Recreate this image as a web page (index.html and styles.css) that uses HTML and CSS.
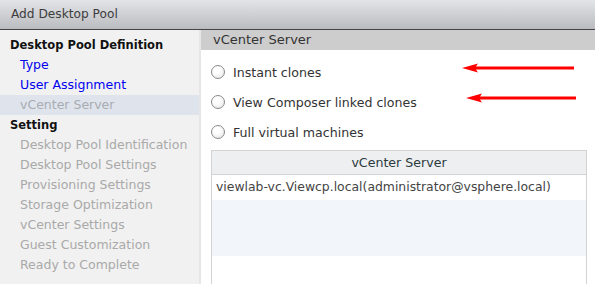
FILE: index.html
```html
<!DOCTYPE html>
<html lang="en">
<head>
  <meta charset="UTF-8">
  <title>Add Desktop Pool</title>
  <link rel="stylesheet" href="styles.css">
</head>
<body>
  <header class="title-bar">Add Desktop Pool</header>
  <div class="wizard">
    <nav class="steps">
      <div class="step group">Desktop Pool Definition</div>
      <div class="step link">Type</div>
      <div class="step link">User Assignment</div>
      <div class="step current">vCenter Server</div>
      <div class="step group">Setting</div>
      <div class="step muted">Desktop Pool Identification</div>
      <div class="step muted">Desktop Pool Settings</div>
      <div class="step muted">Provisioning Settings</div>
      <div class="step muted">Storage Optimization</div>
      <div class="step muted">vCenter Settings</div>
      <div class="step muted">Guest Customization</div>
      <div class="step muted">Ready to Complete</div>
    </nav>
    <main class="content">
      <div class="section-head">vCenter Server</div>
      <div class="options">
        <label class="option">
          <span class="radio"></span>Instant clones
          <svg class="arrow arrow-one" width="112" height="10" viewBox="0 0 112 10"><path d="M0 5 L16 0.5 L14 3.5 L112 3.5 L112 6.5 L14 6.5 L16 9.5 Z" fill="#f00"/></svg>
        </label>
        <label class="option">
          <span class="radio"></span>View Composer linked clones
          <svg class="arrow arrow-two" width="110" height="10" viewBox="0 0 110 10"><path d="M0 5 L16 0.5 L14 3.5 L110 3.5 L110 6.5 L14 6.5 L16 9.5 Z" fill="#f00"/></svg>
        </label>
        <label class="option">
          <span class="radio"></span>Full virtual machines
        </label>
      </div>
      <div class="grid">
        <div class="grid-head">vCenter Server</div>
        <div class="grid-row">viewlab-vc.Viewcp.local(administrator@vsphere.local)</div>
        <div class="grid-row alt"></div>
        <div class="grid-row empty"></div>
      </div>
    </main>
  </div>
</body>
</html>
```

FILE: styles.css
```css
* { margin: 0; padding: 0; box-sizing: border-box; }
body {
  font-family: "DejaVu Sans", Verdana, sans-serif;
  font-size: 12px;
  color: #333;
  background-color: #fff;
  overflow: hidden;
}
.title-bar {
  height: 30px;
  padding: 7px 11px 0;
  font-size: 12.2px;
  color: #3c3c3c;
  background: linear-gradient(#e3e4e8, #bbbcc0);
  border-bottom: 1px solid #454545;
}
.wizard {
  display: flex;
  height: 254px;
}

/* Step list */
.steps {
  width: 201px;
  padding-top: 5px;
  background-color: #f1f1f1;
  border-right: 2px solid #e6e6e6;
}
.step {
  height: 20px;
  line-height: 20px;
  padding-left: 20px;
  font-size: 12.5px;
  white-space: nowrap;
}
.step.group { padding-left: 10px; font-size: 11.5px; font-weight: bold; color: #111; }
.step.link { color: #0000ee; }
.step.current { background-color: #dfe4ec; color: #a8acb2; }
.step.muted { color: #a9a9a9; }

/* Content */
.content {
  flex: 1;
  background-color: #fff;
}
.section-head {
  height: 20px;
  line-height: 19px;
  padding-left: 12px;
  font-size: 13px;
  color: #333;
  background-color: #cdcdcd;
}
.options {
  padding: 7px 0 0 10px;
}
.option {
  position: relative;
  display: flex;
  align-items: center;
  height: 30px;
  font-size: 12.6px;
  color: #333;
}
.radio {
  width: 14px;
  height: 14px;
  margin-right: 8px;
  border: 1px solid #8a8a8a;
  border-radius: 50%;
  background: radial-gradient(circle at 40% 35%, #fff 30%, #e0e0e0 100%);
}
.arrow { position: absolute; }
.arrow-one { left: 251px; top: 6px; }
.arrow-two { left: 255px; top: 6px; }

.grid {
  margin: 3px 8px 0 10px;
  border: 1px solid #d3d3d3;
  border-bottom: none;
}
.grid-head {
  height: 24px;
  line-height: 23px;
  text-align: center;
  font-size: 12.6px;
  color: #2c3a40;
  background-color: #edeff1;
  border-bottom: 1px solid #d3d3d3;
}
.grid-row {
  height: 25px;
  line-height: 24px;
  padding-left: 4px;
  font-size: 12.4px;
  color: #444;
  white-space: nowrap;
}
.grid-row.alt { height: 56px; background-color: #f2f5f9; }
.grid-row.empty { height: 40px; }
```
